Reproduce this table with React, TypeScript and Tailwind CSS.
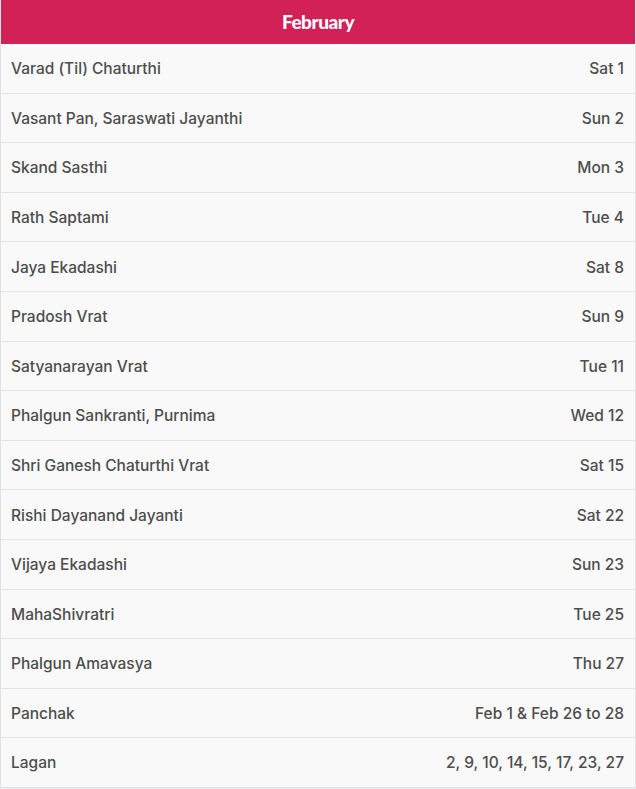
import React from "react";

const rows: [string, string][] = [
  ["Varad (Til) Chaturthi", "Sat 1"],
  ["Vasant Pan, Saraswati Jayanthi", "Sun 2"],
  ["Skand Sasthi", "Mon 3"],
  ["Rath Saptami", "Tue 4"],
  ["Jaya Ekadashi", "Sat 8"],
  ["Pradosh Vrat", "Sun 9"],
  ["Satyanarayan Vrat", "Tue 11"],
  ["Phalgun Sankranti, Purnima", "Wed 12"],
  ["Shri Ganesh Chaturthi Vrat", "Sat 15"],
  ["Rishi Dayanand Jayanti", "Sat 22"],
  ["Vijaya Ekadashi", "Sun 23"],
  ["MahaShivratri", "Tue 25"],
  ["Phalgun Amavasya", "Thu 27"],
  ["Panchak", "Feb 1 & Feb 26 to 28"],
  ["Lagan", "2, 9, 10, 14, 15, 17, 23, 27"],
];

export default function App() {
  return (
    <div className="min-h-screen bg-[#e9eef1]">
      <div className="w-[636px] border-x border-[#e2e2e2] bg-[#f9f9f9]">
        <div className="flex h-[44px] items-center justify-center bg-[#d12157] text-[19px] font-black text-white [font-family:'Lato',sans-serif] tracking-tight">
          February
        </div>
        {rows.map(([name, date]) => (
          <div
            key={name}
            className="flex h-[49.6px] items-center justify-between border-b border-[#e4e4e4] pl-[10px] pr-[11px] pt-[1px] text-[15.5px] font-medium text-[#4d4d4d] [font-family:'Inter',sans-serif]"
          >
            <span>{name}</span>
            <span>{date}</span>
          </div>
        ))}
      </div>
    </div>
  );
}
